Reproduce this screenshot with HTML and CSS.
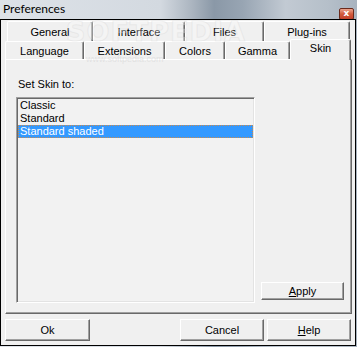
FILE: index.html
```html
<!DOCTYPE html>
<html>
<head>
    <title>Preferences</title>
    <link rel="stylesheet" href="styles.css">
</head>
<body>
    <div class="window">
        <div class="titlebar">
            <span class="title">Preferences</span>
            <span class="close">x</span>
        </div>
        <div class="frame">
            <div class="tab-row row-back">
                <div class="tab" style="width: 86px">General</div>
                <div class="tab" style="width: 92px">Interface</div>
                <div class="tab" style="width: 79px">Files</div>
                <div class="tab" style="width: 86px">Plug-ins</div>
            </div>
            <div class="tab-row row-front">
                <div class="tab" style="width: 79px">Language</div>
                <div class="tab" style="width: 81px">Extensions</div>
                <div class="tab" style="width: 60px">Colors</div>
                <div class="tab" style="width: 65px">Gamma</div>
                <div class="tab selected" style="width: 61px">Skin</div>
            </div>
            <div class="panel">
                <div class="label">Set Skin to:</div>
                <div class="panel-body">
                    <div class="listbox">
                        <div class="item">Classic</div>
                        <div class="item">Standard</div>
                        <div class="item active">Standard shaded</div>
                    </div>
                    <button class="btn apply"><u>A</u>pply</button>
                </div>
            </div>
            <div class="buttons">
                <button class="btn ok">Ok</button>
                <button class="btn cancel">Cancel</button>
                <button class="btn help"><u>H</u>elp</button>
            </div>
        </div>
        <div class="watermark">SOFTPEDIA</div>
        <div class="watermark-url">www.softpedia.com</div>
    </div>
</body>
</html>
```

FILE: styles.css
```css
body {
    margin: 0;
    font-family: "Liberation Sans", Arial, sans-serif;
    font-size: 11px;
    color: #000;
}
.window {
    position: relative;
    width: 357px;
    height: 347px;
    display: flex;
    flex-direction: column;
    background: linear-gradient(90deg, #dde2e8 0%, #d3d9e0 45%, #aab4bf 54%, #8a98a7 60%, #98a5b3 68%, #c2cad3 80%, #b5bfc9 92%, #a8b3bf 100%);
}
.titlebar {
    height: 19px;
    display: flex;
    justify-content: space-between;
    align-items: flex-start;
    padding: 0 3px;
}
.title {
    font-family: Lato, sans-serif;
    font-size: 12px;
    line-height: 16px;
    margin-top: 1px;
}
.close {
    width: 13px;
    height: 10px;
    margin-top: 8px;
    border: 1px solid #6b2a1c;
    border-radius: 2px;
    background: linear-gradient(#eba48e, #d25a3c 50%, #c3402a);
    color: #fff;
    font-family: "DejaVu Sans", sans-serif;
    font-weight: bold;
    font-size: 9px;
    line-height: 9px;
    text-align: center;
}
.frame {
    flex: 1;
    margin: 0 1px 1px 0;
    border: 1px solid #000;
    background: #f0f0f0;
    display: flex;
    flex-direction: column;
}
.tab-row {
    display: flex;
}
.row-back {
    margin: 1px 0 0 6px;
    height: 20px;
}
.row-front {
    margin-left: 4px;
    height: 18px;
    align-items: flex-end;
}
.tab {
    box-sizing: border-box;
    height: 100%;
    border-top: 1px solid #fff;
    border-left: 1px solid #fff;
    border-right: 1px solid #696969;
    box-shadow: inset -1px 0 0 #a0a0a0;
    border-radius: 2px 2px 0 0;
    background: #f0f0f0;
    text-align: center;
    line-height: 13px;
    padding-top: 4px;
}
.row-front .tab {
    padding-top: 3px;
}
.row-front .tab.selected {
    position: relative;
    z-index: 1;
    height: 21px;
    margin-bottom: -1px;
    padding-top: 2px;
}
.panel {
    box-sizing: border-box;
    width: 347px;
    height: 255px;
    margin-left: 4px;
    border-top: 1px solid #fff;
    border-left: 1px solid #fff;
    border-right: 1px solid #696969;
    border-bottom: 1px solid #696969;
    box-shadow: inset -1px -1px 0 #a0a0a0;
    padding: 18px 0 0 10px;
}
.label {
    line-height: 13px;
    padding-left: 2px;
}
.panel-body {
    display: flex;
    align-items: flex-end;
    margin-top: 6px;
}
.listbox {
    box-sizing: border-box;
    width: 239px;
    height: 206px;
    border: 1px solid;
    border-color: #a0a0a0 #fff #fff #a0a0a0;
    box-shadow: inset 1px 1px 0 #696969, inset -1px -1px 0 #e3e3e3;
    background: #f2f2f2;
    padding: 1px 1px 0 1px;
}
.item {
    height: 13px;
    line-height: 13px;
    padding-left: 2px;
}
.item.active {
    box-sizing: border-box;
    background: #3399ff;
    color: #fff;
    outline: 1px dotted #c98a4e;
    outline-offset: -1px;
}
.btn {
    box-sizing: border-box;
    border: 1px solid;
    border-color: #fff #696969 #696969 #fff;
    box-shadow: inset -1px -1px 0 #a0a0a0;
    background: #f0f0f0;
    font-family: "Liberation Sans", Arial, sans-serif;
    font-size: 11px;
    color: #000;
    padding: 0;
    text-align: center;
}
.apply {
    width: 83px;
    height: 18px;
    margin: 0 0 3px 6px;
}
.buttons {
    display: flex;
    margin: 5px 0 0 4px;
}
.buttons .btn {
    height: 22px;
}
.ok {
    width: 85px;
}
.cancel {
    width: 84px;
    margin-left: 90px;
}
.help {
    width: 84px;
    margin-left: 3px;
}
.watermark {
    position: absolute;
    left: 66px;
    top: 16px;
    font-family: "DejaVu Sans", sans-serif;
    font-weight: bold;
    font-size: 27px;
    letter-spacing: 1px;
    color: rgba(255, 255, 255, 0.3);
    -webkit-text-stroke: 1px rgba(200, 200, 200, 0.25);
    pointer-events: none;
}
.watermark-url {
    position: absolute;
    left: 86px;
    top: 54px;
    font-size: 9px;
    color: rgba(205, 205, 205, 0.45);
    pointer-events: none;
}
```
